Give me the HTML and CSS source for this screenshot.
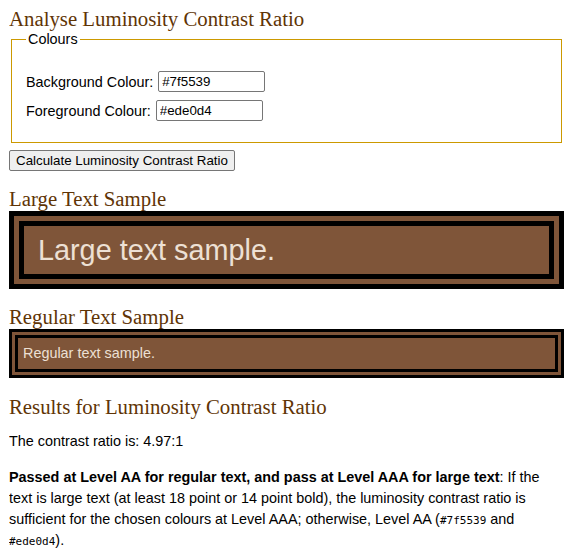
FILE: index.html
```html
<!DOCTYPE html>
<html lang="en">
<head>
<meta charset="utf-8">
<title>Analyse Luminosity Contrast Ratio</title>
<link rel="stylesheet" href="styles.css">
</head>
<body>
<h1 class="title">Analyse Luminosity Contrast Ratio</h1>
<form class="form">
  <fieldset class="colours">
    <legend class="legend">Colours</legend>
    <div class="row"><label class="label" for="bg">Background Colour:</label><input class="field" id="bg" type="text" value="#7f5539"></div>
    <div class="row"><label class="label" for="fg">Foreground Colour:</label><input class="field" id="fg" type="text" value="#ede0d4"></div>
  </fieldset>
  <button class="calc" type="button">Calculate Luminosity Contrast Ratio</button>
</form>
<h2 class="heading">Large Text Sample</h2>
<div class="sample sample-large"><div class="sample-inner">Large text sample.</div></div>
<h2 class="heading">Regular Text Sample</h2>
<div class="sample sample-regular"><div class="sample-inner">Regular text sample.</div></div>
<h2 class="heading heading-results">Results for Luminosity Contrast Ratio</h2>
<p class="text text-first">The contrast ratio is: 4.97:1</p>
<p class="text"><strong>Passed at Level AA for regular text, and pass at Level AAA for large text</strong>: If the text is large text (at least 18 point or 14 point bold), the luminosity contrast ratio is sufficient for the chosen colours at Level AAA; otherwise, Level AA (<code class="code">#7f5539</code> and <code class="code">#ede0d4</code>).</p>
</body>
</html>
```

FILE: styles.css
```css
html { background: #fff; }
body {
  margin: 7px 13px 8px 9px;
  font-family: "Liberation Sans", Arial, sans-serif;
  font-size: 14.4px;
  color: #000;
}
.title, .heading {
  font-family: "Liberation Serif", "Times New Roman", serif;
  font-weight: normal;
  font-size: 20.8px;
  line-height: 24px;
  color: #5f3405;
  margin: 0;
}
.form { margin: 0; }
.colours {
  margin: 0 2px;
  border: 1px solid #cc9900;
  padding: 0 14px 21px;
}
.legend {
  padding: 0 2px;
  font-size: 14.4px;
  line-height: 16px;
}
.row {
  display: flex;
  align-items: center;
  gap: 5px;
  height: 21px;
  margin-top: 8px;
}
.row:first-of-type { margin-top: 24px; }
.label { font-size: 14.4px; }
.field {
  box-sizing: border-box;
  width: 107px;
  height: 21px;
  border: 1px solid #767676;
  border-radius: 2px;
  padding: 1px 3px;
  font-family: "Liberation Sans", Arial, sans-serif;
  font-size: 13.33px;
  color: #000;
  background: #fff;
  margin: 0;
}
.calc {
  display: block;
  margin-top: 7px;
  box-sizing: border-box;
  height: 21px;
  padding: 1px 6px;
  border: 1px solid #767676;
  border-radius: 2px;
  background: #efefef;
  font-family: "Liberation Sans", Arial, sans-serif;
  font-size: 13.33px;
  color: #000;
}
.heading { margin: 16px 0 0; }
.sample {
  background: #7f5539;
  border-style: solid;
  border-color: #000;
}
.sample-inner {
  border-style: solid;
  border-color: #000;
  color: #ede0d4;
}
.sample-large { border-width: 5px; padding: 5px; }
.sample-large .sample-inner {
  border-width: 5px;
  padding: 7px 14px;
  font-size: 28.8px;
  line-height: 34px;
}
.sample-regular { border-width: 3px; padding: 3px; }
.sample-regular .sample-inner {
  border-width: 3px;
  padding: 7px 5px;
  font-size: 14.4px;
  line-height: 17px;
}
.heading-results { margin-top: 17px; }
.text {
  margin: 15px 0 0;
  line-height: 21px;
}
.text-first { margin-top: 12px; }
.code {
  font-family: "DejaVu Sans Mono", "Liberation Mono", monospace;
  font-size: 11px;
  line-height: 1;
}
```
